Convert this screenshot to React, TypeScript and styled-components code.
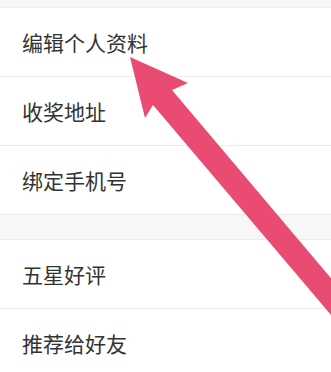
import React from 'react';
import styled, { createGlobalStyle } from 'styled-components';

const GlobalStyle = createGlobalStyle`
  html, body {
    margin: 0;
    padding: 0;
    background: #ffffff;
  }
  body {
    font-family: "Noto Sans CJK SC", "Noto Sans", sans-serif;
  }
`;

const Page = styled.div`
  position: relative;
  width: 331px;
  height: 372px;
  overflow: hidden;
  background: #ffffff;
`;

const TopStrip = styled.div`
  height: 7px;
  background: #f6f6f6;
  border-bottom: 1px solid #eeeeee;
`;

const Group = styled.div`
  display: flex;
  flex-direction: column;
  background: #ffffff;
`;

const Row = styled.div<{ $last?: boolean }>`
  display: flex;
  align-items: center;
  height: 68px;
  padding-left: 22px;
  border-bottom: ${p => (p.$last ? 'none' : '1px solid #ececec')};
  font-size: 21px;
  color: #333333;
`;

const Gap = styled.div`
  height: 24px;
  background: #f7f7f7;
  border-bottom: 1px solid #ececec;
`;

const Arrow = styled.svg`
  position: absolute;
  left: 0;
  top: 0;
  pointer-events: none;
`;

const firstGroup = ['编辑个人资料', '收奖地址', '绑定手机号'];
const secondGroup = ['五星好评', '推荐给好友'];

export default function App() {
  return (
    <Page>
      <GlobalStyle />
      <TopStrip />
      <Group>
        {firstGroup.map(label => (
          <Row key={label}>{label}</Row>
        ))}
      </Group>
      <Gap />
      <Group>
        {secondGroup.map((label, i) => (
          <Row key={label} $last={i === secondGroup.length - 1}>
            {label}
          </Row>
        ))}
      </Group>
      <Arrow width="331" height="372" viewBox="0 0 331 372">
        <polygon
          points="130,57 188,83 172,90 417,380 386,380 153,105 145,118"
          fill="#e94b72"
        />
      </Arrow>
    </Page>
  );
}
